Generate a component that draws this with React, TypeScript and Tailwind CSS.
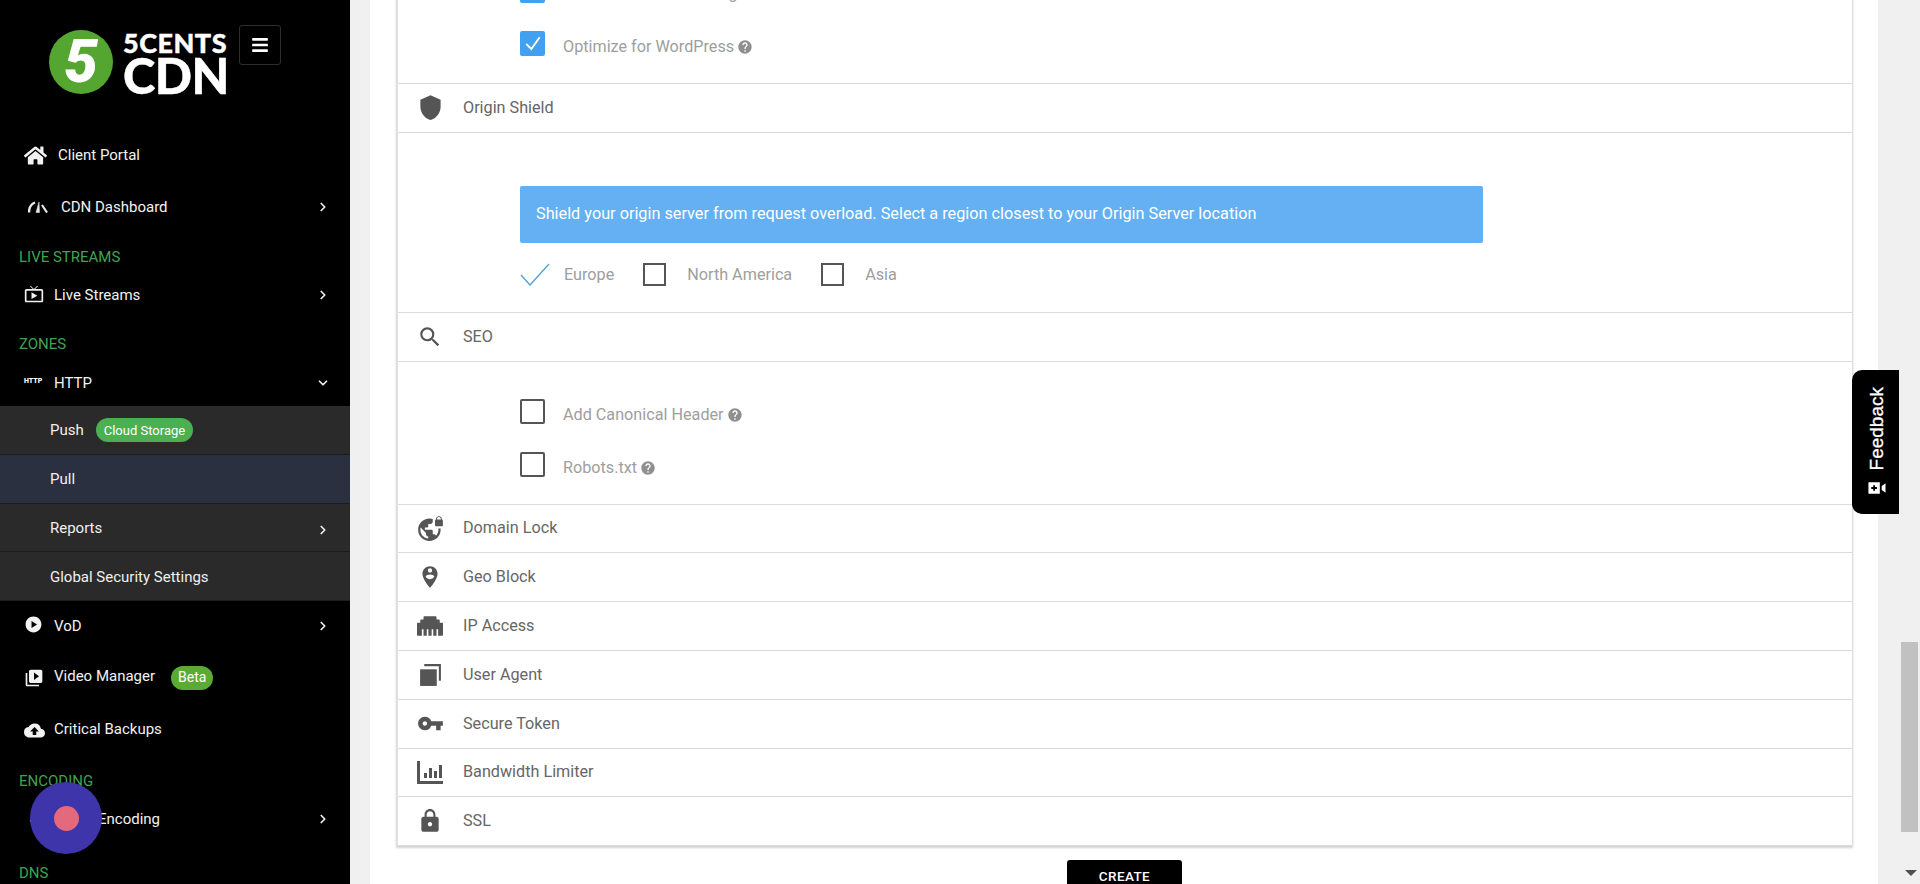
import { ChevronDown, ChevronRight } from 'lucide-react';
import { FaBars, FaEthernet, FaHome } from 'react-icons/fa';
import {
  MdCloudUpload,
  MdHelp,
  MdLock,
  MdOutlineLiveTv,
  MdPersonPinCircle,
  MdPlayCircle,
  MdSearch,
  MdShield,
  MdVideoLibrary,
  MdVpnKey,
  MdVpnLock,
} from 'react-icons/md';

const font = { fontFamily: 'Roboto, sans-serif' };

function Gauge() {
  return (
    <svg viewBox="0 0 20 12" className="w-[20px] h-[12px]" fill="none" stroke="#e8e8e8">
      <path d="M1 11.5 C1 7 3 3 7 1.5" strokeWidth="2.4" />
      <path d="M11 1 L8 11.5 L11.5 11.5 Z" fill="#e8e8e8" strokeWidth="0.5" />
      <path d="M14 4 L19 11.5" strokeWidth="2.2" />
    </svg>
  );
}

function Stacked() {
  return (
    <svg viewBox="0 0 24 24" className="w-[25px] h-[25px]" fill="#555">
      <path d="M2 7h16v16H2z" />
      <path d="M6 2h16v16h-2V4H6z" />
    </svg>
  );
}

function Bars() {
  return (
    <svg viewBox="0 0 26 26" className="w-[26px] h-[26px]" fill="#555">
      <path d="M0 2h3v20h23v3H0z" />
      <path d="M7 14h3v5H7zM12 9h3v10h-3zM17 12h3v7h-3zM22 6h3v13h-3z" />
    </svg>
  );
}

function SectionRow({ icon, label }: { icon: React.ReactNode; label: string }) {
  return (
    <div className="h-[48.8px] flex items-center border-b border-[#dcdcdc] text-[16.2px] text-[#666666]">
      <div className="w-[65px] pl-[17px] flex justify-start shrink-0">
        <div className="w-[30px] flex justify-center text-[#555]">{icon}</div>
      </div>
      <span>{label}</span>
    </div>
  );
}

function Help() {
  return <MdHelp className="inline-block ml-[3px] w-[16px] h-[16px] text-[#8f8f8f]" />;
}

function Check({ checked }: { checked?: boolean }) {
  if (checked) {
    return (
      <div className="w-[25px] h-[25px] rounded-[2px] bg-[#42a0f0] flex items-center justify-center shrink-0">
        <svg viewBox="0 0 24 24" className="w-[20px] h-[20px]" fill="none" stroke="white" strokeWidth="2.2">
          <path d="M4 12 L10 18 L20 4" />
        </svg>
      </div>
    );
  }
  return <div className="w-[25px] h-[25px] rounded-[2px] border-2 border-[#555] shrink-0" />;
}

function CheckRow({ label, checked, help }: { label: string; checked?: boolean; help?: boolean }) {
  return (
    <div className="h-[53px] flex items-start pt-[14px] text-[16.2px] text-[#9e9e9e]">
      <Check checked={checked} />
      <span className="ml-[18px] mt-[4px] flex items-center">
        {label}
        {help && <Help />}
      </span>
    </div>
  );
}

function NavItem({
  icon,
  label,
  h,
  gap,
  arrow,
  down,
  badge,
}: {
  icon?: React.ReactNode;
  label: string;
  h: string;
  gap: string;
  arrow?: boolean;
  down?: boolean;
  badge?: React.ReactNode;
}) {
  return (
    <div className={`${h} relative flex items-center pl-[24px] pr-[20px] text-[15px] text-[#f2f2f2]`}>
      <div className={`${gap} flex justify-start shrink-0`}>{icon}</div>
      <span>{label}</span>
      {badge}
      <div className="ml-auto">
        {arrow && <ChevronRight size={14} strokeWidth={3} className="text-[#eeeeee]" />}
        {down && <ChevronDown size={14} strokeWidth={3} className="text-[#eeeeee]" />}
      </div>
    </div>
  );
}

function Heading({ label, className }: { label: string; className?: string }) {
  return <div className={`h-[32px] flex items-center pl-[19px] text-[15px] text-[#3fa352] ${className ?? ''}`}>{label}</div>;
}

function SubItem({ label, active, arrow, badge }: { label: string; active?: boolean; arrow?: boolean; badge?: React.ReactNode }) {
  return (
    <div
      className={`h-[48.8px] flex items-center pl-[50px] pr-[20px] pt-[1px] text-[15px] text-[#f0f0f0] border-b border-[#1c1c1c] ${
        active ? 'bg-[#2a3040]' : 'bg-[#2a2a2a]'
      }`}
    >
      <span>{label}</span>
      {badge}
      {arrow && <ChevronRight size={14} strokeWidth={3} className="ml-auto mt-[4px] text-[#eeeeee]" />}
    </div>
  );
}

export default function App() {
  return (
    <div className="relative h-[884px] w-[1920px] overflow-hidden flex bg-[#f0f0f0]" style={font}>
      <aside className="w-[350px] h-full bg-black shrink-0 overflow-hidden">
        <div className="h-[130px] pl-[49px] pt-[25px] flex items-start">
          <div className="w-[64px] h-[64px] mt-[5px] rounded-full bg-[#55a630] flex items-center justify-center text-white text-[60px] font-black italic leading-none shrink-0">
            5
          </div>
          <div className="ml-[10px] w-[105px] pt-[5px] text-white font-black leading-none [-webkit-text-stroke:0.4px_white]" style={{ fontFamily: 'Lato, sans-serif' }}>
            <div className="text-[27px] h-[25px] tracking-[0.5px] leading-[25px]">5CENTS</div>
            <div className="text-[49px] h-[40px] leading-[40px] -tracking-[0.5px]">CDN</div>
          </div>
          <div className="ml-[11px] w-[42px] h-[40px] rounded-[3px] border border-[#2e2e2e] flex items-center justify-center shrink-0">
            <FaBars className="w-[18px] h-[18px] text-white" />
          </div>
        </div>

        <NavItem h="h-[51px]" gap="w-[34px]" icon={<FaHome className="w-[23px] h-[23px] text-[#f2f2f2]" />} label="Client Portal" />
        <NavItem h="h-[52px]" gap="w-[37px]" icon={<span className="pl-[4px]"><Gauge /></span>} label="CDN Dashboard" arrow />
        <Heading label="LIVE STREAMS" className="mt-[8px]" />
        <NavItem h="h-[44px]" gap="w-[30px]" icon={<MdOutlineLiveTv className="w-[20px] h-[20px] text-[#f2f2f2] -mt-[3px]" />} label="Live Streams" arrow />
        <Heading label="ZONES" className="mt-[11px]" />
        <NavItem
          h="h-[46px]"
          gap="w-[30px]"
          icon={<span className="text-[7px] font-black text-white -mt-[4px]">HTTP</span>}
          label="HTTP"
          down
        />
        <SubItem
          label="Push"
          badge={<span className="ml-[12px] h-[24px] px-[8px] rounded-full bg-[#4caf50] text-[13px] text-white flex items-center">Cloud Storage</span>}
        />
        <SubItem label="Pull" active />
        <SubItem label="Reports" arrow />
        <SubItem label="Global Security Settings" />
        <NavItem h="h-[50px]" gap="w-[30px]" icon={<MdPlayCircle className="w-[19px] h-[19px] text-[#f2f2f2] -mt-[4px]" />} label="VoD" arrow />
        <NavItem
          h="h-[50px]"
          gap="w-[30px]"
          icon={<MdVideoLibrary className="w-[20px] h-[20px] text-[#f2f2f2] mt-[3px]" />}
          label="Video Manager"
          badge={<span className="ml-[16px] mt-[3px] h-[24px] px-[7px] rounded-full bg-[#5aab34] text-[14px] text-white flex items-center">Beta</span>}
        />
        <NavItem h="h-[56px]" gap="w-[30px]" icon={<MdCloudUpload className="w-[21px] h-[21px] text-[#f2f2f2] mt-[2px]" />} label="Critical Backups" />
        <Heading label="ENCODING" className="mt-[8px]" />
        <NavItem h="h-[44px]" gap="w-[74px]" label="Encoding" arrow icon={<span className="pl-[4px] text-[#f2f2f2] text-[14px]">✓</span>} />
        <Heading label="DNS" className="mt-[16px]" />
      </aside>

      <main className="flex-1 h-full pl-[20px] pr-[42px] overflow-hidden">
        <div className="h-full bg-white pl-[26px] pr-[25px] overflow-hidden">
          <div className="-mt-[36px] bg-white border-l-2 border-r border-[#e0e0e0] shadow-[0_2px_2px_rgba(0,0,0,0.18)]">
            <div className="pl-[122px] pb-[13px] border-b border-[#dcdcdc]">
              <CheckRow label="Enable Browser Caching" checked />
              <CheckRow label="Optimize for WordPress" checked help />
            </div>

            <SectionRow icon={<MdShield className="w-[27px] h-[27px]" />} label="Origin Shield" />
            <div className="pl-[122px] pt-[53px] h-[180px] border-b border-[#dcdcdc]">
              <div className="w-[963px] h-[57px] rounded-[2px] bg-[#64b0f2] text-white text-[16.25px] flex items-center pl-[16px]">
                Shield your origin server from request overload. Select a region closest to your Origin Server location
              </div>
              <div className="mt-[20px] flex items-center text-[16.2px] text-[#9e9e9e]">
                <svg viewBox="0 0 30 24" className="w-[30px] h-[24px] shrink-0" fill="none" stroke="#4d9fdc" strokeWidth="1.3">
                  <path d="M1 12 L10 22 L29 1" />
                </svg>
                <span className="ml-[14px]">Europe</span>
                <div className="w-[23px] h-[23px] ml-[29px] border-2 border-[#555] shrink-0" />
                <span className="ml-[21px]">North America</span>
                <div className="w-[23px] h-[23px] ml-[29px] border-2 border-[#555] shrink-0" />
                <span className="ml-[21px]">Asia</span>
              </div>
            </div>

            <SectionRow icon={<MdSearch className="w-[26px] h-[26px]" />} label="SEO" />
            <div className="pl-[122px] pt-[23px] pb-[13px] border-b border-[#dcdcdc]">
              <CheckRow label="Add Canonical Header" help />
              <CheckRow label="Robots.txt" help />
            </div>

            <SectionRow icon={<MdVpnLock className="w-[27px] h-[27px]" />} label="Domain Lock" />
            <SectionRow icon={<MdPersonPinCircle className="w-[26px] h-[26px]" />} label="Geo Block" />
            <SectionRow icon={<FaEthernet className="w-[26px] h-[26px]" />} label="IP Access" />
            <SectionRow icon={<Stacked />} label="User Agent" />
            <SectionRow icon={<MdVpnKey className="w-[27px] h-[27px]" />} label="Secure Token" />
            <SectionRow icon={<Bars />} label="Bandwidth Limiter" />
            <SectionRow icon={<MdLock className="w-[26px] h-[26px]" />} label="SSL" />
          </div>

          <div className="mt-[14px] flex justify-center">
            <button className="w-[115px] h-[32px] rounded-[3px] bg-black text-white text-[13.5px] font-medium tracking-[0.4px]">CREATE</button>
          </div>
        </div>
      </main>

      <div className="absolute left-[1852px] top-[370px] w-[47px] h-[144px] rounded-l-[10px] bg-black flex items-center justify-center pl-[4px]">
        <div className="flex items-center gap-[8px] -rotate-90 text-white text-[19px] whitespace-nowrap [-webkit-text-stroke:0.3px_white]" style={{ fontFamily: '"Liberation Sans", sans-serif' }}>
          <svg viewBox="0 0 20 14" className="w-[19px] h-[14px] rotate-90" fill="white">
            <path d="M1 1h12v12H1zM15 5l4-3v10l-4-3z" />
            <path d="M6 4h2v2h2v2H8v2H6V8H4V6h2z" fill="black" />
          </svg>
          <span>Feedback</span>
        </div>
      </div>

      <div className="absolute left-[1901px] top-[642px] w-[17px] h-[190px] bg-[#c1c1c1]" />
      <div className="absolute left-[1905px] top-[870px] w-0 h-0 border-l-[6px] border-r-[6px] border-t-[6px] border-l-transparent border-r-transparent border-t-[#505050]" />

      <div className="absolute left-[30px] top-[782px] w-[72px] h-[72px] rounded-full bg-[#3f35ab] flex items-center justify-center">
        <div className="w-[25px] h-[25px] rounded-full bg-[#e5697c]" />
      </div>
    </div>
  );
}
